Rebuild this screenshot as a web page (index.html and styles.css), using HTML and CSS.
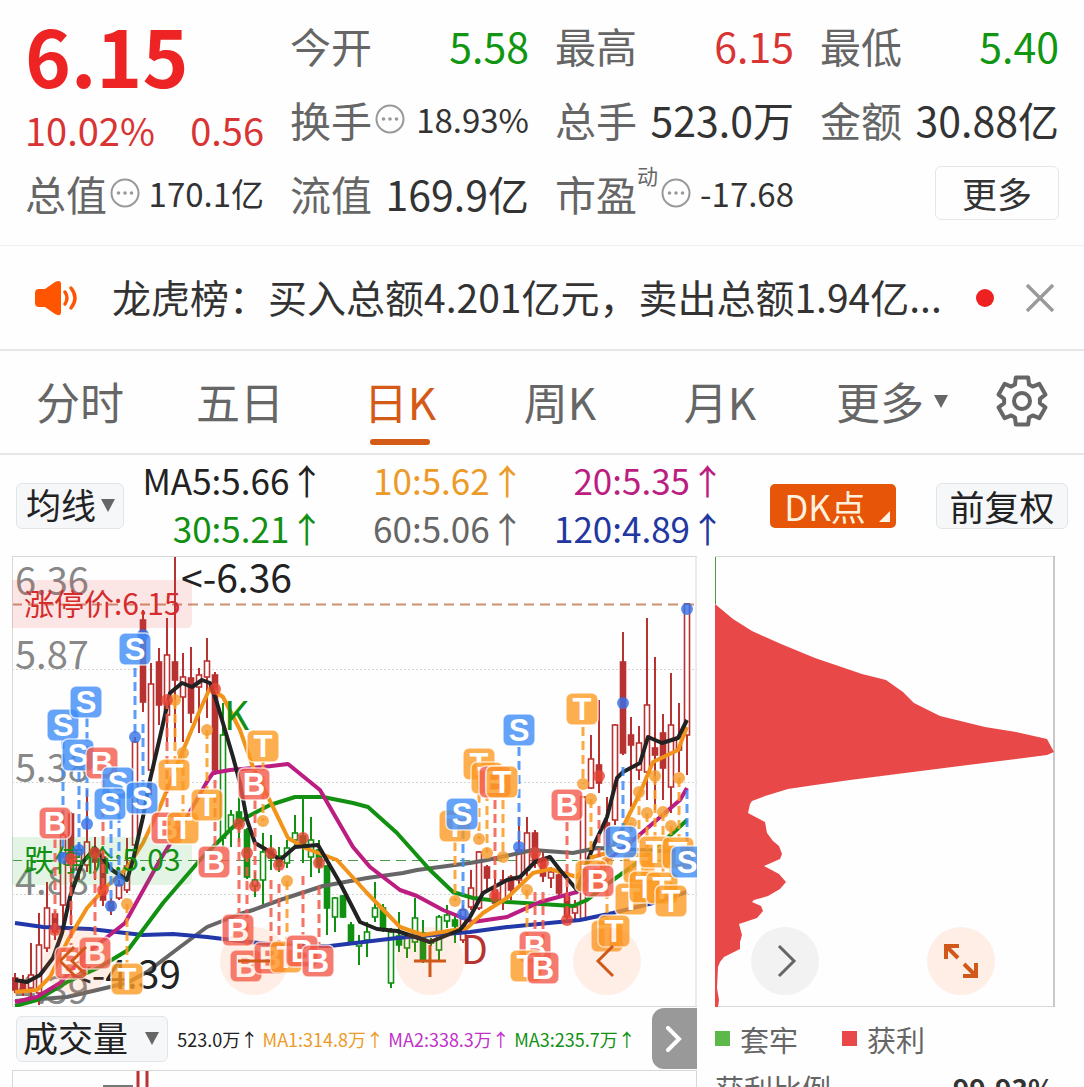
FILE: index.html
```
<!DOCTYPE html>
<html lang="zh-CN">
<head>
    <meta charset="utf-8">
    <meta name="viewport" content="width=device-width, initial-scale=1">
    <title>日K行情</title>
    <link rel="stylesheet" href="styles.css">
</head>
<body>

<svg class="defs">
    <symbol id="i-more" viewBox="0 0 30 30">
        <circle cx="15" cy="15" r="13.5" fill="none" stroke="#999" stroke-width="2"/>
        <circle cx="8.5" cy="15" r="1.8" fill="#999"/>
        <circle cx="15" cy="15" r="1.8" fill="#999"/>
        <circle cx="21.5" cy="15" r="1.8" fill="#999"/>
    </symbol>
    <symbol id="i-down" viewBox="0 0 14 13">
        <path d="M0 0H14L7 13Z" fill="#666"/>
    </symbol>
</svg>

<div class="app">

    <!-- 报价 -->
    <header class="quote">
        <div class="price-box">
            <div class="price">6.15</div>
            <div class="change"><span>10.02%</span><span>0.56</span></div>
        </div>
        <div class="cell"><span class="name">今开</span><span class="val green">5.58</span></div>
        <div class="cell"><span class="name">最高</span><span class="val red">6.15</span></div>
        <div class="cell"><span class="name">最低</span><span class="val green">5.40</span></div>
        <div class="cell"><span class="name">换手</span><svg class="tip"><use href="#i-more"/></svg><span class="val small">18.93%</span></div>
        <div class="cell"><span class="name">总手</span><span class="val">523.0万</span></div>
        <div class="cell"><span class="name">金额</span><span class="val">30.88亿</span></div>
        <div class="cell"><span class="name">总值</span><svg class="tip"><use href="#i-more"/></svg><span class="val small">170.1亿</span></div>
        <div class="cell"><span class="name">流值</span><span class="val">169.9亿</span></div>
        <div class="cell"><span class="name">市盈</span><span class="dyn">动</span><svg class="tip"><use href="#i-more"/></svg><span class="val small">-17.68</span></div>
        <div class="cell"><button class="more-btn">更多</button></div>
    </header>

    <!-- 公告 -->
    <div class="notice">
        <svg class="horn" viewBox="0 0 44 36">
            <path d="M1 13Q1 9 5 9H11L21 2Q27-1 27 4V32Q27 37 21 34L11 27H5Q1 27 1 23Z" fill="#ff5500"/>
            <path d="M31 12Q35 18 31 24M37 8Q45 18 37 28" fill="none" stroke="#ff5500" stroke-width="3.4" stroke-linecap="round"/>
        </svg>
        <a class="notice-text" href="#">龙虎榜：买入总额4.201亿元，卖出总额1.94亿...</a>
        <span class="dot"></span>
        <button class="close" aria-label="关闭">
            <svg viewBox="0 0 28 28"><path d="M1 1L27 27M27 1L1 27" stroke="#999" stroke-width="3.4"/></svg>
        </button>
    </div>

    <nav class="tabs">
        <button>分时</button>
        <button>五日</button>
        <button class="active">日K</button>
        <button>周K</button>
        <button>月K</button>
        <button>更多<svg class="arrow"><use href="#i-down"/></svg></button>
        <button aria-label="设置">
            <svg class="gear" viewBox="-26 -26 52 52" fill="none" stroke="#666" stroke-width="4" stroke-linejoin="round">
                <path d="M-7-16.6L-6.2-23.6H6.2L7-16.6L10.8-14.4L17.3-17.2L23.4-6.4L17.9-2.2V2.2L23.4 6.4L17.3 17.2L10.8 14.4L7 16.6L6.2 23.6H-6.2L-7 16.6L-10.8 14.4L-17.3 17.2L-23.4 6.4L-17.9 2.2V-2.2L-23.4-6.4L-17.3-17.2L-10.8-14.4Z"/>
                <circle r="8"/>
            </svg>
        </button>
    </nav>

    <!-- 均线 -->
    <div class="tools">
        <label class="drop">
            <select aria-label="主图指标"><option>均线</option></select>
            <svg class="arrow"><use href="#i-down"/></svg>
        </label>
        <div class="ma">
            <span class="c5">MA5:5.66↑</span>
            <span class="c10">10:5.62↑</span>
            <span class="c20">20:5.35↑</span>
            <span class="c30">30:5.21↑</span>
            <span class="c60">60:5.06↑</span>
            <span class="c120">120:4.89↑</span>
        </div>
        <button class="dk">DK点</button>
        <button class="plain">前复权</button>
    </div>

    <main class="charts">
        <section class="left">
            <div class="panel">
                <svg id="kline" viewBox="12 556 685 451"></svg>
                <div class="controls">
                    <button class="round" aria-label="最早"><svg viewBox="0 0 34 34"><path d="M14 3L0 17L14 31M26 3L12 17L26 31"/></svg></button>
                    <button class="round" aria-label="缩小"><svg viewBox="0 0 34 34"><path d="M1 17H33"/></svg></button>
                    <button class="round" aria-label="放大"><svg viewBox="0 0 34 34"><path d="M1 17H33M17 1V33"/></svg></button>
                    <button class="round" aria-label="左移"><svg viewBox="0 0 34 34"><path d="M23 2L8 17L23 32"/></svg></button>
                </div>
            </div>
            <div class="volume-bar">
                <label class="drop wide">
                    <select aria-label="副图指标"><option>成交量</option></select>
                    <svg class="arrow"><use href="#i-down"/></svg>
                </label>
                <span class="c5">523.0万↑</span>
                <span class="c10">MA1:314.8万↑</span>
                <span class="cv">MA2:338.3万↑</span>
                <span class="c30">MA3:235.7万↑</span>
                <button class="next" aria-label="下一个"><svg viewBox="0 0 16 26"><path d="M2 2L13 13L2 24"/></svg></button>
            </div>
            <svg class="volume" viewBox="12 1070 685 80">
                <path d="M103 1086H133" stroke="#777" stroke-width="2"/>
                <path d="M138 1150V1071M147 1071V1150" stroke="#b83232" stroke-width="3"/>
                <path d="M12 1070.5H697M12.5 1070V1150M696.5 1070V1150" stroke="#d8d8d8"/>
            </svg>
        </section>

        <section class="right">
            <div class="panel">
                <svg viewBox="715 556 340 451">
                    <path d="M715 556.5H1055M715 1006.5H1055" stroke="#d8d8d8"/>
                    <path d="M1054 556V1007" stroke="#c8c8c8" stroke-width="2"/>
                    <path d="M715.5 557V604" stroke="#4a9a3c"/>
                    <path id="chips" fill="#e84848"/>
                </svg>
                <div class="controls">
                    <button class="round gray" aria-label="右移"><svg viewBox="0 0 34 34"><path d="M11 2L26 17L11 32"/></svg></button>
                    <button class="round bold" aria-label="全屏"><svg viewBox="0 0 34 34"><path d="M2 15V2H15M2 2L14 14M32 19V32H19M32 32L20 20"/></svg></button>
                </div>
            </div>
            <div class="legend">
                <span><i class="sq sq-green"></i>套牢</span>
                <span><i class="sq sq-red"></i>获利</span>
            </div>
            <div class="ratio"><span>获利比例</span><b>99.93%</b></div>
        </section>
    </main>
</div>

<script src="chart.js"></script>
</body>
</html>
```
FILE: styles.css
```
* {
    box-sizing: border-box;
}
body {
    margin: 0;
    font-family: "Noto Sans CJK SC", sans-serif;
    color: #333;
    background: #fefefe;
}
button, select {
    font: inherit;
    color: inherit;
    margin: 0;
    padding: 0;
    border: 0;
    background: none;
}
svg {
    display: block;
}
.defs {
    position: absolute;
    width: 0;
    height: 0;
}
.app {
    height: 100vh;
    overflow: hidden;
    white-space: nowrap;
}

.red { color: #d93434; }
.green { color: #119611; }
.c5 { color: #222; }
.c10 { color: #ec9a28; }
.c20 { color: #bb1e80; }
.c30 { color: #119011; }
.c60 { color: #666; }
.c120 { color: #2237a0; }
.cv { color: #c030c8; }

/* quote */
.quote {
    display: grid;
    grid-template-columns: repeat(4, minmax(0, 1fr));
    grid-template-rows: repeat(3, 74px);
    column-gap: 26px;
    padding: 8px 25px 15px;
    border-bottom: 1px solid #f0f0f0;
}
.price-box {
    grid-row: span 2;
    color: #d93434;
}
.price {
    height: 96px;
    line-height: 92px;
    font-size: 78px;
    font-weight: 700;
    color: #ee2424;
}
.change {
    display: flex;
    justify-content: space-between;
    line-height: 52px;
    font-size: 38px;
}
.cell {
    display: flex;
    align-items: center;
    font-size: 41px;
}
.name {
    color: #666;
}
.val {
    margin-left: auto;
}
.small {
    font-size: 33px;
}
.tip {
    flex: none;
    width: 30px;
    height: 30px;
    margin-left: 3px;
}
.dyn {
    align-self: flex-start;
    padding-top: 4px;
    font-size: 21px;
    color: #666;
}
.more-btn {
    width: 124px;
    height: 54px;
    margin-left: auto;
    border: 1px solid #e4e6e8;
    border-radius: 6px;
    font-size: 35px;
    line-height: 48px;
}

/* notice */
.notice {
    display: flex;
    align-items: center;
    height: 105px;
    padding: 0 30px 0 34px;
    border-bottom: 2px solid #e6e8e8;
}
.horn {
    width: 44px;
    height: 36px;
}
.notice-text {
    flex: 1;
    margin-left: 34px;
    padding-bottom: 4px;
    font-size: 39px;
    color: #333;
    text-decoration: none;
}
.dot {
    width: 18px;
    height: 18px;
    border-radius: 50%;
    background: #ee2020;
}
.close {
    width: 28px;
    margin-left: 32px;
}

/* tabs */
.tabs {
    display: grid;
    grid-template-columns: repeat(5, 160fr) 184fr 76fr;
    height: 104px;
    padding-right: 24px;
    border-bottom: 2px solid #e6e8e8;
    font-size: 44px;
    color: #666;
}
.tabs button {
    display: flex;
    align-items: center;
    justify-content: center;
    position: relative;
    padding-bottom: 2px;
}
.tabs .active {
    color: #d45a18;
}
.tabs .active::after {
    content: "";
    position: absolute;
    bottom: 8px;
    width: 60px;
    height: 6px;
    border-radius: 3px;
    background: #d45a18;
}
.arrow {
    width: 14px;
    height: 13px;
}
.tabs .arrow {
    margin-left: 10px;
}
.gear {
    width: 52px;
    height: 52px;
}

/* indicators */
.tools {
    display: flex;
    align-items: center;
    height: 101px;
    padding: 0 16px;
    font-size: 35px;
}
.drop {
    position: relative;
    flex: none;
    width: 108px;
    font-size: 35px;
    color: #222;
}
.drop select {
    appearance: none;
    display: block;
    width: 100%;
    height: 46px;
    padding: 0 0 4px 9px;
    border: 1px solid #e2e5e8;
    border-radius: 6px;
    line-height: 40px;
    background: #f5f7f9;
}
.drop .arrow {
    position: absolute;
    right: 9px;
    top: 16px;
    pointer-events: none;
}
.drop.wide {
    width: 152px;
    margin-right: 5px;
}
.drop.wide select {
    padding-left: 6px;
}
.ma {
    flex: 1;
    display: grid;
    grid-template-columns: repeat(3, 1fr);
    margin-right: 45px;
    padding-bottom: 4px;
    line-height: 48px;
    text-align: right;
}
.dk {
    position: relative;
    width: 126px;
    height: 44px;
    margin-right: 40px;
    padding-right: 16px;
    border-radius: 5px;
    line-height: 40px;
    color: #fdf0dc;
    background: #e65508;
}
.dk::after {
    content: "";
    position: absolute;
    right: 6px;
    bottom: 6px;
    border-left: 11px solid transparent;
    border-bottom: 11px solid #fff4e6;
}
.plain {
    width: 132px;
    height: 46px;
    border: 1px solid #e2e5e8;
    border-radius: 6px;
    line-height: 40px;
    color: #222;
    background: #f5f7f9;
}

/* charts */
.charts {
    display: grid;
    grid-template-columns: minmax(0, 685fr) minmax(0, 340fr);
    column-gap: 18px;
    padding: 0 29px 0 12px;
}
.panel {
    position: relative;
}
.panel > svg, .volume {
    width: 100%;
}
.controls {
    position: absolute;
    left: 31px;
    right: 56px;
    bottom: 12px;
    display: flex;
    justify-content: space-between;
}
.right .controls {
    left: 36px;
    right: 60px;
}
.round {
    width: 68px;
    height: 68px;
    border-radius: 50%;
    background: rgba(255, 120, 60, 0.12);
}
.round svg {
    width: 34px;
    margin: auto;
    fill: none;
    stroke: #d05818;
    stroke-width: 3;
}
.round.gray {
    background: #f2f2f2;
}
.round.gray svg {
    stroke: #666;
}
.round.bold svg {
    stroke-width: 4;
}

.volume-bar {
    display: flex;
    align-items: center;
    justify-content: space-between;
    height: 63px;
    padding-left: 4px;
    font-size: 18px;
}
.next {
    flex: none;
    width: 45px;
    height: 61px;
    margin-left: 12px;
    border-radius: 12px 0 0 12px;
    background: #999;
}
.next svg {
    width: 16px;
    margin: auto;
    fill: none;
    stroke: #fff;
    stroke-width: 4;
    stroke-linecap: round;
}

.legend {
    display: flex;
    gap: 44px;
    height: 63px;
    align-items: center;
    font-size: 29px;
    color: #666;
}
.legend span {
    display: flex;
    align-items: center;
}
.sq {
    width: 15px;
    height: 15px;
    margin-right: 10px;
}
.sq-green { background: #5cb848; }
.sq-red { background: #e84848; }
.ratio {
    display: flex;
    justify-content: space-between;
    line-height: 36px;
    font-size: 29px;
    color: #666;
}
.ratio b {
    font-size: 28px;
    color: #333;
}

/* svg text */
.axis {
    font-size: 38px;
    fill: #888;
}
.peak {
    font-size: 39px;
    fill: #222;
}
.limit {
    font-size: 30px;
}
.tag {
    font-family: "Liberation Sans", sans-serif;
    font-size: 31px;
    font-weight: 700;
    fill: #fff;
    text-anchor: middle;
}
```
FILE: chart.js
```
const RED = '#b83232';
const GREEN = '#119011';
const MARK = {S: '#3f8cf8', B: '#f25a4c', T: '#fc9a22'};
const DOT = {S: '#3470e8', B: '#e84434', T: '#f59a2a'};

// x, high, body top, body bottom, low, kind (r/g hollow, R/G solid)
const candles = [
    [15, 973, 978, 990, 993, 'R'], [23, 975, 982, 990, 996, 'R'], [31, 943, 975, 988, 1000, 'r'],
    [39, 913, 945, 993, 1005, 'r'], [47, 882, 908, 948, 952, 'r'], [55, 911, 914, 932, 940, 'R'],
    [63, 812, 835, 905, 930, 'r'], [71, 812, 814, 865, 925, 'R'], [79, 842, 850, 870, 880, 'r'],
    [87, 790, 842, 865, 872, 'r'], [95, 837, 850, 862, 880, 'R'], [103, 850, 857, 900, 906, 'R'],
    [111, 898, 902, 910, 915, 'R'], [119, 880, 885, 898, 900, 'r'], [127, 838, 866, 890, 893, 'r'],
    [135, 737, 742, 845, 848, 'r'], [143, 610, 620, 702, 712, 'R'], [151, 663, 684, 770, 795, 'r'],
    [159, 648, 662, 705, 725, 'R'], [167, 618, 655, 715, 742, 'r'], [175, 557, 662, 680, 742, 'R'],
    [183, 653, 677, 697, 742, 'r'], [191, 647, 678, 713, 723, 'R'], [199, 668, 675, 687, 733, 'r'],
    [207, 638, 661, 677, 718, 'r'], [215, 672, 675, 770, 775, 'R'], [223, 703, 735, 838, 847, 'g'],
    [231, 810, 815, 828, 847, 'g'], [239, 797, 812, 826, 842, 'G'], [247, 828, 830, 877, 879, 'G'],
    [255, 872, 880, 886, 897, 'g'], [263, 833, 852, 880, 907, 'g'], [271, 835, 850, 858, 870, 'G'],
    [279, 847, 856, 866, 872, 'G'], [287, 840, 848, 863, 868, 'g'], [295, 815, 833, 840, 848, 'g'],
    [303, 798, 836, 846, 863, 'G'], [311, 817, 840, 857, 877, 'g'], [319, 840, 850, 866, 873, 'G'],
    [327, 865, 866, 908, 935, 'G'], [335, 897, 898, 917, 932, 'g'], [343, 895, 896, 917, 918, 'G'],
    [351, 922, 925, 942, 943, 'G'], [359, 935, 943, 946, 965, 'g'], [367, 922, 932, 940, 957, 'g'],
    [375, 882, 908, 917, 922, 'g'], [383, 904, 908, 930, 932, 'G'], [391, 928, 932, 983, 988, 'g'],
    [399, 912, 936, 945, 952, 'G'], [407, 934, 937, 948, 958, 'g'], [415, 898, 918, 942, 952, 'g'],
    [423, 920, 933, 960, 963, 'G'], [431, 938, 941, 943, 946, 'G'], [439, 915, 917, 950, 960, 'g'],
    [447, 905, 915, 921, 928, 'g'], [455, 915, 920, 926, 943, 'G'], [463, 905, 910, 940, 943, 'r'],
    [471, 870, 888, 907, 910, 'r'], [479, 851, 852, 908, 910, 'r'], [487, 865, 867, 878, 890, 'R'],
    [495, 870, 890, 903, 907, 'R'], [503, 870, 880, 900, 910, 'r'], [511, 875, 877, 890, 900, 'R'],
    [519, 817, 850, 880, 884, 'r'], [527, 817, 833, 870, 876, 'r'], [535, 830, 833, 863, 868, 'R'],
    [543, 850, 860, 876, 882, 'R'], [551, 867, 872, 878, 888, 'r'], [559, 872, 875, 893, 895, 'R'],
    [567, 887, 897, 917, 923, 'R'], [575, 900, 907, 913, 920, 'r'], [583, 796, 797, 920, 921, 'r'],
    [591, 735, 759, 788, 789, 'r'], [599, 700, 765, 783, 793, 'R'], [607, 797, 823, 850, 855, 'R'],
    [615, 724, 725, 820, 825, 'r'], [623, 632, 662, 753, 755, 'R'], [631, 717, 735, 745, 807, 'R'],
    [639, 726, 743, 770, 780, 'r'], [647, 618, 705, 772, 800, 'r'], [655, 657, 748, 755, 810, 'R'],
    [663, 714, 733, 768, 800, 'R'], [671, 673, 725, 787, 813, 'r'], [679, 703, 737, 750, 772, 'r'],
    [687, 603, 604, 735, 775, 'r']
];

const lines = [
    ['#666', '15,1001 67,997 127,983 147,972 180,947 207,927 240,914 253,910 280,900 323,886 367,878 403,873 417,870 470,863 487,860 533,850 573,853 597,848 640,850 687,852'],
    ['#2237a8', '15,923 43,927 90,929 143,935 173,934 207,937 240,941 290,946 330,946 397,938 470,932 507,927 580,920 613,913 653,903 687,892'],
    ['#119011', '15,1006 37,1000 67,982 100,967 128,950 163,903 200,860 233,827 247,817 270,805 295,797 323,797 353,803 368,807 397,833 430,870 453,892 473,898 507,902 573,906 587,900 613,880 637,863 673,833 687,820'],
    ['#bb1e80', '15,1002 37,997 60,983 87,953 125,923 160,860 187,817 208,780 213,773 230,770 263,767 288,764 320,790 353,847 370,867 400,890 417,896 443,910 473,922 507,917 540,902 577,892 600,866 637,837 680,800 687,788'],
    ['#f2941a', '15,992 37,990 50,977 68,940 87,908 105,888 127,868 143,843 160,807 182,753 200,710 210,688 223,697 240,730 253,767 273,807 288,838 305,848 337,860 367,893 400,927 423,935 467,928 483,913 507,898 533,873 550,869 577,877 593,857 610,852 625,823 640,793 653,762 678,750 687,727'],
    ['#222', '15,980 27,982 40,975 53,958 62,933 70,897 82,863 95,848 112,870 127,880 133,860 143,817 150,780 160,737 170,693 182,683 192,687 202,680 210,683 217,703 233,757 240,783 247,820 255,843 267,850 280,860 295,847 318,845 340,883 360,922 377,929 397,931 430,942 460,930 470,917 483,893 507,880 520,877 535,862 550,857 560,870 577,890 593,847 607,817 617,778 623,772 640,763 648,737 662,743 678,738 687,720']
];

// x, from, to, kind
const drops = [
    [135, 668, 737, 'S'], [143, 724, 785, 'S'], [87, 718, 824, 'S'], [63, 740, 858, 'S'],
    [79, 772, 850, 'S'], [119, 800, 881, 'S'], [111, 820, 906, 'S'], [463, 830, 914, 'S'],
    [519, 747, 847, 'S'], [623, 767, 830, 'S'], [687, 790, 850, 'S'],
    [175, 700, 760, 'T'], [183, 753, 812, 'T'], [207, 730, 790, 'T'], [263, 762, 821, 'T'],
    [127, 904, 963, 'T'], [287, 881, 940, 'T'], [455, 842, 901, 'T'], [479, 780, 839, 'T'],
    [487, 792, 853, 'T'], [503, 800, 857, 'T'], [527, 890, 950, 'T'], [583, 727, 784, 'T'],
    [591, 799, 860, 'T'], [607, 862, 920, 'T'], [631, 823, 882, 'T'], [639, 792, 852, 'T'],
    [647, 813, 872, 'T'], [655, 776, 838, 'T'], [663, 812, 872, 'T'], [671, 826, 886, 'T'],
    [679, 778, 838, 'T'],
    [239, 824, 915, 'B'], [247, 853, 950, 'B'], [255, 800, 886, 'B'], [271, 880, 945, 'B'],
    [279, 884, 945, 'B'], [303, 876, 935, 'B'], [319, 886, 945, 'B'], [55, 839, 930, 'B'],
    [71, 859, 945, 'B'], [95, 870, 938, 'B'], [103, 780, 890, 'B'], [167, 700, 812, 'B'],
    [215, 780, 846, 'B'], [495, 800, 896, 'B'], [535, 892, 930, 'B'], [543, 892, 950, 'B'],
    [567, 822, 920, 'B'], [599, 806, 864, 'B']
];

const dots = {
    S: [[143, 635], [135, 737], [87, 824], [79, 850], [63, 858], [119, 881], [111, 906], [463, 914], [519, 847], [623, 703], [687, 609]],
    T: [[175, 700], [207, 730], [183, 753], [127, 904], [263, 821], [287, 881], [455, 901], [479, 839], [487, 853], [503, 857],
        [527, 890], [583, 784], [591, 799], [607, 862], [631, 823], [639, 792], [647, 813], [655, 776], [663, 812], [671, 826], [679, 778]],
    B: [[215, 689], [167, 700], [239, 824], [247, 853], [255, 886], [271, 853], [279, 865], [303, 838], [319, 863], [55, 930],
        [71, 859], [95, 853], [103, 890], [495, 896], [535, 853], [543, 863], [567, 920], [599, 776]]
};

const tags = [
    ['S', 135, 649], ['S', 63, 725], ['S', 86, 702], ['S', 78, 755], ['B', 102, 763], ['S', 118, 783],
    ['S', 110, 804], ['S', 142, 798], ['B', 55, 823], ['T', 174, 775], ['B', 167, 828], ['T', 183, 828],
    ['T', 207, 805], ['B', 214, 862], ['T', 263, 746], ['B', 254, 784], ['B', 71, 963], ['B', 95, 953],
    ['T', 127, 979], ['B', 238, 930], ['B', 246, 966], ['B', 270, 958], ['T', 286, 957], ['B', 302, 951],
    ['B', 318, 961], ['T', 479, 764], ['T', 487, 778], ['B', 495, 782], ['T', 502, 782], ['S', 519, 730],
    ['T', 455, 826], ['S', 462, 814], ['T', 582, 709], ['B', 567, 805], ['T', 591, 876], ['B', 598, 881],
    ['T', 639, 868], ['S', 621, 842], ['T', 655, 852], ['T', 678, 853], ['T', 631, 899], ['T', 645, 887],
    ['T', 662, 888], ['T', 671, 901], ['S', 687, 862], ['T', 607, 936], ['T', 614, 931], ['B', 535, 947],
    ['T', 526, 966], ['B', 543, 968]
];

const chips = '715,604 733,619 752,631 781,644 815,658 862,674 886,680 903,692 914,703 940,716 985,727 1016,732 1047,739 1054,752 1047,755 1000,761 960,766 905,773 850,780 815,785 788,789 765,796 752,801 750,804 748,813 765,822 767,833 773,841 779,846 782,854 780,859 764,866 779,874 786,882 780,889 768,896 754,900 752,902 761,906 763,911 757,918 739,924 742,935 740,942 740,949 724,957 720,962 718,967 717,988 719,1000 718,1007 715,1007';

function drawCandle([x, high, top, bottom, low, kind]) {
    const color = kind.toLowerCase() === 'r' ? RED : GREEN;
    const fill = kind === kind.toUpperCase() ? color : '#fff';
    return `<path d="M${x} ${high}V${low}" stroke="${color}" stroke-width="2"/>
        <rect x="${x - 2.5}" y="${top}" width="5" height="${bottom - top}" fill="${fill}" stroke="${color}" stroke-width="1.6"/>`;
}

function drawTag([kind, x, y]) {
    return `<rect x="${x - 16}" y="${y - 16}" width="32" height="32" rx="6" fill="${MARK[kind]}" fill-opacity="0.8" stroke="#fff" stroke-opacity="0.7" stroke-width="1.5"/>
        <text class="tag" x="${x}" y="${y + 11}">${kind}</text>`;
}

function drawKline() {
    let out = '';
    // grid
    [669, 782, 894].forEach(y => out += `<path d="M12 ${y}.5H697" stroke="#d4d4d4" stroke-dasharray="2 2"/>`);
    out += '<path d="M12 604.5H697" stroke="#cc9070" stroke-width="2" stroke-dasharray="10 6"/>';
    out += '<path d="M12 860.5H697" stroke="#4a9a4a" stroke-dasharray="10 6"/>';
    out += '<path d="M12 556.5H697M12 1006.5H697M12.5 556V1007M696 556V1007" fill="none" stroke="#d8d8d8"/>';
    // axis
    [['6.36', 595], ['5.87', 669], ['5.38', 782], ['4.88', 895], ['4.39', 1004]].forEach(([t, y]) =>
        out += `<text class="axis" x="15" y="${y}">${t}</text>`);
    out += candles.map(drawCandle).join('');
    lines.forEach(([color, points]) =>
        out += `<polyline points="${points}" fill="none" stroke="${color}" stroke-width="4" stroke-linejoin="round"/>`);
    // limit prices
    out += `<path d="M12 580H186Q192 580 192 586V622Q192 628 186 628H12Z" fill="#f04040" fill-opacity="0.13"/>
        <text class="limit" x="24" y="615" fill="#d62c2c">涨停价:6.15</text>
        <path d="M12 837H186Q192 837 192 843V879Q192 885 186 885H12Z" fill="#20b030" fill-opacity="0.12"/>
        <text class="limit" x="24" y="871" fill="${GREEN}">跌停价:5.03</text>`;
    out += `<text class="peak" x="181" y="593">&lt;-6.36</text>
        <text class="peak" x="181" y="989" text-anchor="end">&lt;-4.39</text>
        <text class="peak" x="224" y="730" style="fill:${GREEN}">K</text>
        <text class="peak" x="461" y="964" style="fill:${RED}">D</text>`;
    drops.forEach(([x, from, to, kind]) =>
        out += `<path d="M${x} ${from}V${to}" stroke="${MARK[kind]}" stroke-opacity="0.85" stroke-width="3" stroke-dasharray="9 5"/>`);
    for (const kind in dots) {
        dots[kind].forEach(([x, y]) => out += `<circle cx="${x}" cy="${y}" r="6" fill="${DOT[kind]}" fill-opacity="0.8"/>`);
    }
    out += tags.map(drawTag).join('');
    document.getElementById('kline').innerHTML = out;
}

drawKline();
document.getElementById('chips').setAttribute('d', 'M' + chips.split(' ').join('L') + 'Z');
```
